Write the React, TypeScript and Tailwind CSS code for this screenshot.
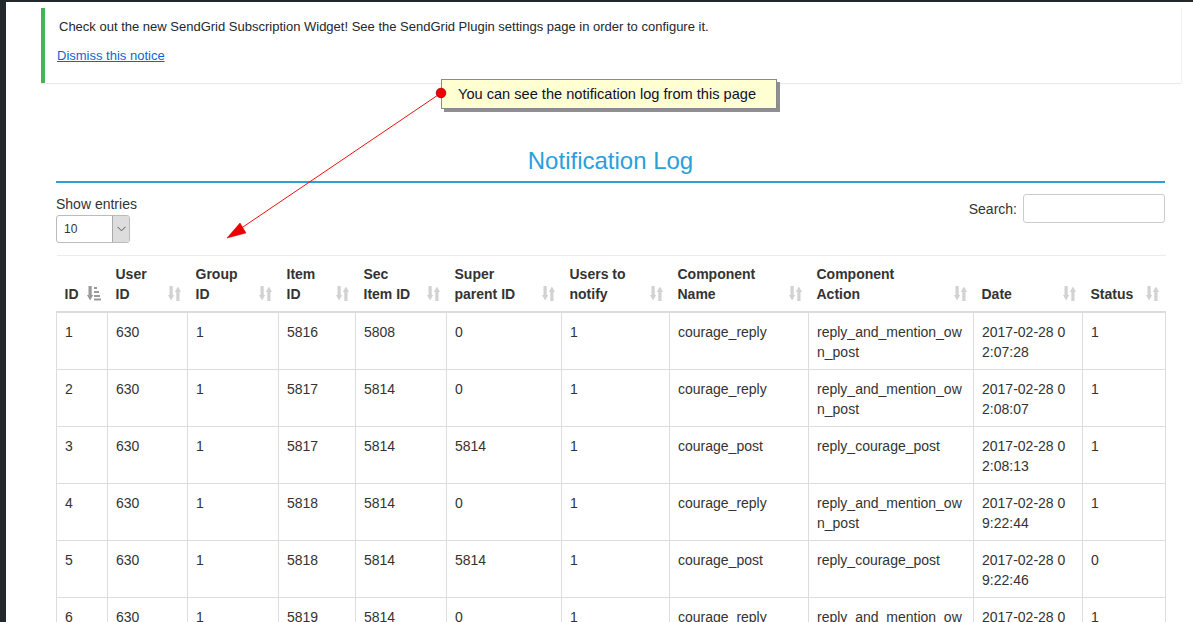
import React from "react";

const FONT = { fontFamily: '"Liberation Sans", Arial, sans-serif' };

function SortBoth() {
  return (
    <svg width="13" height="15" viewBox="0 0 13 15" className="block">
      <g fill="#d2d2d2">
        <rect x="1.5" y="0" width="3.2" height="10" />
        <polygon points="0,9 6.2,9 3.1,14.5" />
        <rect x="8.3" y="5" width="3.2" height="10" />
        <polygon points="6.8,6 13,6 9.9,0.5" />
      </g>
    </svg>
  );
}

function SortDesc() {
  return (
    <svg width="14" height="15" viewBox="0 0 14 15" className="block">
      <g fill="#9a9a9a">
        <rect x="1.5" y="0" width="3.2" height="10" />
        <polygon points="0,9 6.2,9 3.1,14.5" />
        <rect x="7" y="1" width="3" height="2" />
        <rect x="7" y="5" width="5" height="2" />
        <rect x="7" y="9" width="6" height="2" />
        <rect x="7" y="12.5" width="7" height="2" />
      </g>
    </svg>
  );
}

const headers: { label: React.ReactNode; w: number; desc?: boolean }[] = [
  { label: "ID", w: 51, desc: true },
  { label: <>User<br />ID</>, w: 80 },
  { label: <>Group<br />ID</>, w: 91 },
  { label: <>Item<br />ID</>, w: 77 },
  { label: <>Sec<br />Item ID</>, w: 91 },
  { label: <>Super<br />parent ID</>, w: 115 },
  { label: <>Users to<br />notify</>, w: 108 },
  { label: <>Component<br />Name</>, w: 139 },
  { label: <>Component<br />Action</>, w: 165 },
  { label: "Date", w: 109 },
  { label: "Status", w: 83 },
];

type Row = string[][];
const rows: Row[] = [
  [["1"], ["630"], ["1"], ["5816"], ["5808"], ["0"], ["1"], ["courage_reply"], ["reply_and_mention_ow", "n_post"], ["2017-02-28 0", "2:07:28"], ["1"]],
  [["2"], ["630"], ["1"], ["5817"], ["5814"], ["0"], ["1"], ["courage_reply"], ["reply_and_mention_ow", "n_post"], ["2017-02-28 0", "2:08:07"], ["1"]],
  [["3"], ["630"], ["1"], ["5817"], ["5814"], ["5814"], ["1"], ["courage_post"], ["reply_courage_post"], ["2017-02-28 0", "2:08:13"], ["1"]],
  [["4"], ["630"], ["1"], ["5818"], ["5814"], ["0"], ["1"], ["courage_reply"], ["reply_and_mention_ow", "n_post"], ["2017-02-28 0", "9:22:44"], ["1"]],
  [["5"], ["630"], ["1"], ["5818"], ["5814"], ["5814"], ["1"], ["courage_post"], ["reply_courage_post"], ["2017-02-28 0", "9:22:46"], ["0"]],
  [["6"], ["630"], ["1"], ["5819"], ["5814"], ["0"], ["1"], ["courage_reply"], ["reply_and_mention_ow", "n_post"], ["2017-02-28 0", "9:22:50"], ["1"]],
];

export default function App() {
  return (
    <div className="relative w-[1193px] h-[622px] overflow-hidden bg-white text-[#333]" style={FONT}>
      <div className="h-[2px] bg-[#23282d]" />
      <div className="flex h-[620px]">
        <div className="w-[6px] shrink-0 bg-[#23282d]" />
        <div className="flex-1 min-w-0">
          {/* Notice */}
          <div className="ml-[35px] mr-[12px] mt-[6px] h-[75px] border-l-4 border-[#46b450] bg-white pl-[12px] pt-[9px] shadow-[0_1px_1px_rgba(0,0,0,0.08),1px_0_1px_rgba(0,0,0,0.04)]">
            <p className="text-[13px] leading-5 pl-[2px] text-[#23282d]">
              Check out the new SendGrid Subscription Widget! See the SendGrid Plugin settings page in order to configure it.
            </p>
            <p className="mt-[9px] text-[13px] leading-5">
              <a href="#" className="text-[#0a66d8] underline">Dismiss this notice</a>
            </p>
          </div>

          {/* Content */}
          <div className="ml-[50px] mr-[28px]">
            <div className="mt-[63px] pb-[5px] border-b-2 border-[#29a0da] text-center text-[24px] leading-[30px] text-[#29a0da]">
              Notification Log
            </div>

            <div className="flex justify-between items-start">
              <div className="mt-[11px]">
                <div className="text-[14px] leading-5">Show entries</div>
                <div className="mt-[1px] flex h-[28px] w-[74px] rounded-[3px] border border-[#bbb] overflow-hidden bg-white">
                  <div className="flex-1 pl-[7px] text-[12px] leading-[26px]">10</div>
                  <div className="w-[17px] bg-[#dddddd] border-l border-[#aaa] flex items-center justify-center">
                    <svg width="9" height="6" viewBox="0 0 9 6">
                      <polyline points="0.5,0.8 4.5,4.8 8.5,0.8" fill="none" stroke="#555" strokeWidth="1" />
                    </svg>
                  </div>
                </div>
              </div>
              <div className="mt-[11px] flex items-center gap-[6px]">
                <span className="text-[14px] leading-5 mt-[1px]">Search:</span>
                <div className="h-[29px] w-[142px] rounded-[3px] border border-[#ccc] bg-white" />
              </div>
            </div>

            {/* Table */}
            <table className="mt-[12px] table-fixed border-collapse w-[1109px] text-[14px] leading-5">
              <colgroup>
                {headers.map((h, i) => (
                  <col key={i} style={{ width: h.w }} />
                ))}
              </colgroup>
              <thead>
                <tr className="border-b-2 border-t border-b-[#dddddd] border-t-[#ececec]">
                  {headers.map((h, i) => (
                    <th
                      key={i}
                      className="relative text-left align-bottom font-bold whitespace-nowrap pl-[8px] pt-[8px] pb-[7px] text-[#333]"
                    >
                      <span className="block">{h.label}</span>
                      {h.desc ? (
                        <span className="absolute left-[30px] bottom-[10px]"><SortDesc /></span>
                      ) : (
                        <span className="absolute right-[7px] bottom-[10px]"><SortBoth /></span>
                      )}
                    </th>
                  ))}
                </tr>
              </thead>
              <tbody>
                {rows.map((r, ri) => (
                  <tr key={ri}>
                    {r.map((c, ci) => (
                      <td
                        key={ci}
                        className="border border-[#dddddd] align-top pl-[8px] pr-[4px] pt-[9px] pb-[7px] h-[57px] whitespace-nowrap overflow-hidden"
                      >
                        {c.map((line, li) => (
                          <div key={li}>{line}</div>
                        ))}
                        {c.length === 1 && <div>&nbsp;</div>}
                      </td>
                    ))}
                  </tr>
                ))}
              </tbody>
            </table>
          </div>
        </div>
      </div>

      {/* Annotation overlay */}
      <svg className="absolute left-0 top-0 pointer-events-none" width="1193" height="622">
        <line x1="441" y1="93" x2="240" y2="229" stroke="#f01010" strokeWidth="1" />
        <polygon points="227,238 240,223 246,233" fill="#ee0000" stroke="#c00000" strokeWidth="0.5" />
      </svg>
      <div className="absolute left-[441px] top-[79px] h-[30px] w-[336px] border border-[#8a8a8a] bg-[#ffffd2] shadow-[3px_3px_0_#8f8f8f] pl-[16px] text-[14.6px] leading-[28px] text-[#10102a]">
        You can see the notification log from this page
      </div>
      <svg className="absolute left-[435px] top-[87px] pointer-events-none" width="12" height="12">
        <circle cx="6" cy="6" r="4.8" fill="#f00000" stroke="#a00000" strokeWidth="0.8" />
      </svg>
    </div>
  );
}
